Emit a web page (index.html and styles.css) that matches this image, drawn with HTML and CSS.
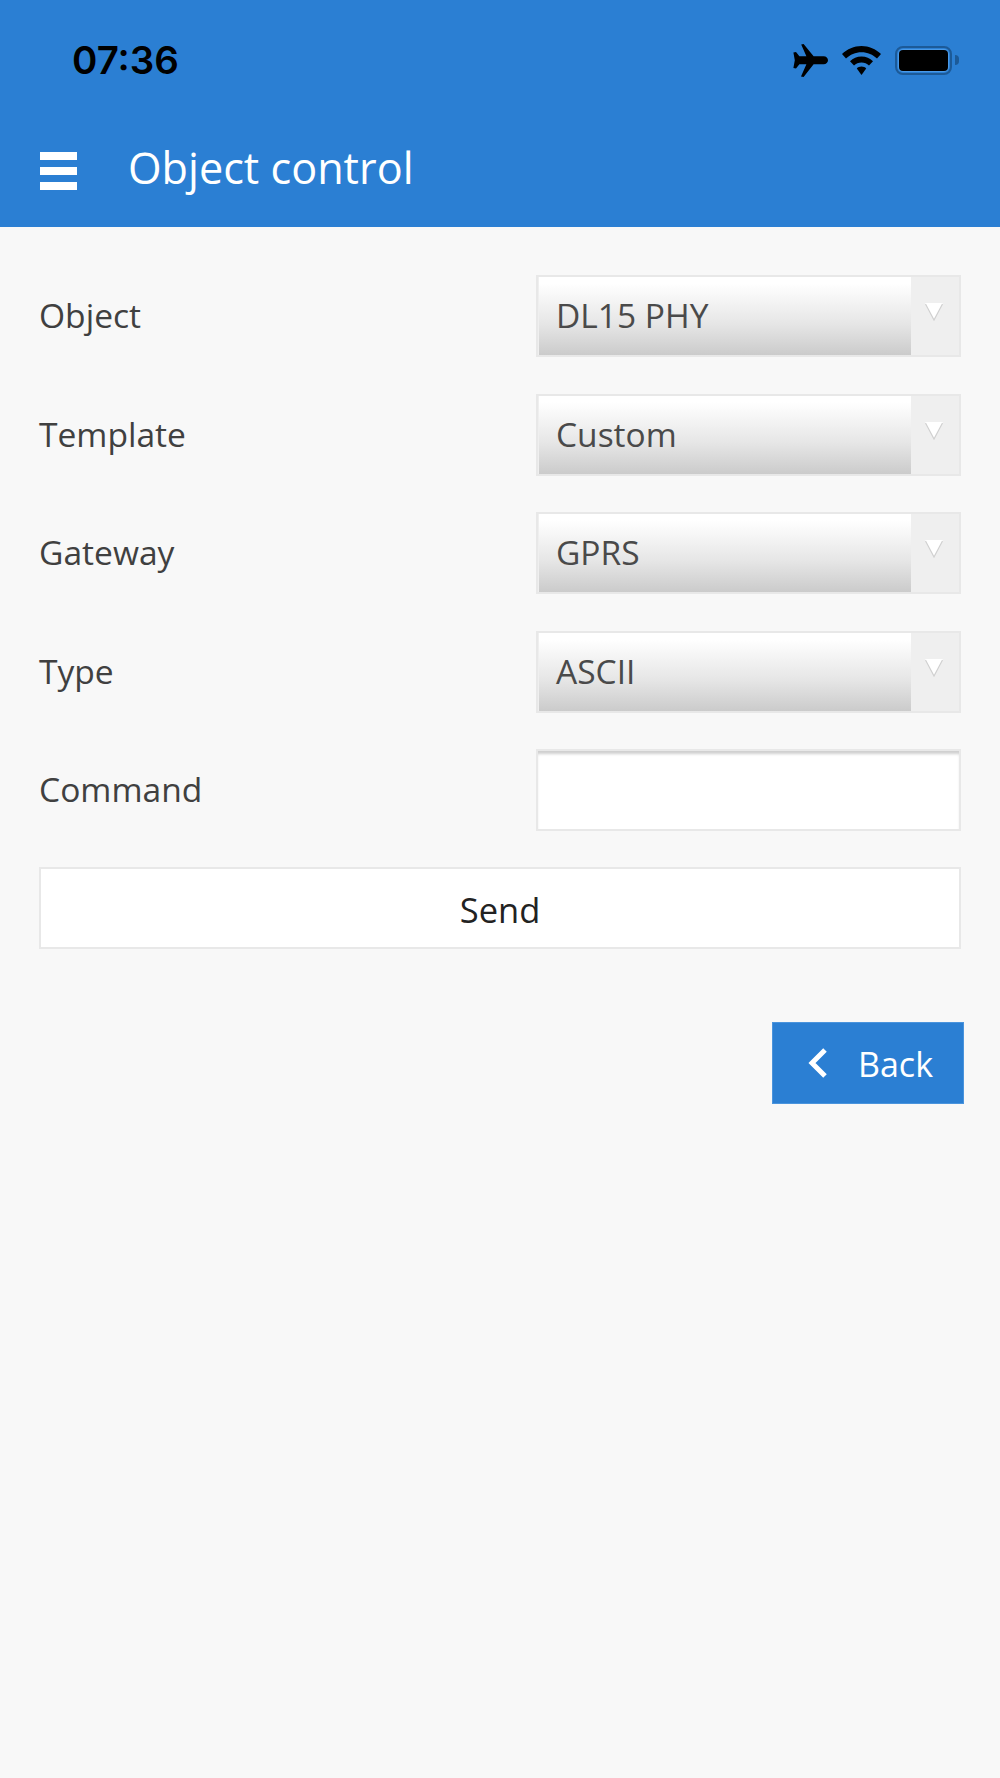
FILE: index.html
```html
<!DOCTYPE html>
<html lang="en">
<head>
  <meta charset="UTF-8" />
  <meta name="viewport" content="width=device-width, initial-scale=1.0"/>
  <title>Object control</title>
  <link rel="stylesheet" href="styles.css">
</head>
<body>

  <header class="app-header">
    <!-- Status bar -->
    <div class="status-bar">
      <span class="clock">07:36</span>
      <div class="status-icons">
        <svg class="icon-plane" viewBox="0 0 35 33" aria-hidden="true">
          <path d="M8.2 0.6 L10.6 0 L20.6 12.2 L30.6 12.2 C33.2 12.2 35 14.4 35 16.2 C35 18.2 33.2 20.2 30.6 20.2 L20.6 20.2 L10.6 33 L8 32.4 L13.4 20.2 L6.4 20.2 L3 24.4 L0.4 24 L1.8 16.2 L0.4 8.4 L3 8 L6.4 12.2 L13.4 12.2 Z"/>
        </svg>
        <svg class="icon-wifi" viewBox="0 0 39 29" aria-hidden="true">
          <path d="M19.5 0 C27 0 33.8 3 39 8 L35 12.6 C31 8.6 25.5 6.2 19.5 6.2 C13.5 6.2 8 8.6 4 12.6 L0 8 C5.2 3 12 0 19.5 0 Z"/>
          <path d="M19.5 10.4 C24 10.4 28 12.2 31 15.2 L27 19.6 C25 17.6 22.4 16.5 19.5 16.5 C16.6 16.5 14 17.6 12 19.6 L8 15.2 C11 12.2 15 10.4 19.5 10.4 Z"/>
          <path d="M19.5 20.6 C21.4 20.6 23 21.3 24.2 22.5 L19.5 29 L14.8 22.5 C16 21.3 17.6 20.6 19.5 20.6 Z"/>
        </svg>
        <div class="battery">
          <div class="battery-level"></div>
        </div>
        <div class="battery-nub"></div>
      </div>
    </div>

    <!-- Title bar -->
    <div class="title-bar">
      <div class="menu-icon"><span></span><span></span><span></span></div>
      <h1>Object control</h1>
    </div>
  </header>

  <main class="content">
    <div class="form-row">
      <label>Object</label>
      <div class="select-box">
        <div class="select-value">DL15 PHY</div>
        <div class="select-arrow"><svg viewBox="0 0 18 18" aria-hidden="true"><path class="arrow-fill" d="M0 0 L18 0 L9 17 Z"/><path class="arrow-line" d="M0.5 1 L9 17 L17.5 1"/></svg></div>
      </div>
    </div>
    <div class="form-row">
      <label>Template</label>
      <div class="select-box">
        <div class="select-value">Custom</div>
        <div class="select-arrow"><svg viewBox="0 0 18 18" aria-hidden="true"><path class="arrow-fill" d="M0 0 L18 0 L9 17 Z"/><path class="arrow-line" d="M0.5 1 L9 17 L17.5 1"/></svg></div>
      </div>
    </div>
    <div class="form-row">
      <label>Gateway</label>
      <div class="select-box">
        <div class="select-value">GPRS</div>
        <div class="select-arrow"><svg viewBox="0 0 18 18" aria-hidden="true"><path class="arrow-fill" d="M0 0 L18 0 L9 17 Z"/><path class="arrow-line" d="M0.5 1 L9 17 L17.5 1"/></svg></div>
      </div>
    </div>
    <div class="form-row">
      <label>Type</label>
      <div class="select-box">
        <div class="select-value">ASCII</div>
        <div class="select-arrow"><svg viewBox="0 0 18 18" aria-hidden="true"><path class="arrow-fill" d="M0 0 L18 0 L9 17 Z"/><path class="arrow-line" d="M0.5 1 L9 17 L17.5 1"/></svg></div>
      </div>
    </div>
    <div class="form-row">
      <label for="command">Command</label>
      <input type="text" id="command" class="text-input" />
    </div>

    <button class="send-btn">Send</button>

    <div class="actions">
      <button class="back-btn">
        <svg viewBox="0 0 20 30" aria-hidden="true"><path d="M17 2 L4 15 L17 28"/></svg>
        Back
      </button>
    </div>
  </main>

</body>
</html>
```

FILE: styles.css
```css
:root {
  --blue: #2b7fd3;
  --bg: #f8f8f8;
  --line: #e8e8e8;
  --text: #404040;
}

* {
  margin: 0;
  padding: 0;
  box-sizing: border-box;
  font-family: 'Open Sans', sans-serif;
}

body {
  background-color: var(--bg);
  color: var(--text);
  min-height: 1778px;
}

.app-header {
  background: var(--blue);
  height: 227px;
}

.status-bar {
  height: 120px;
  display: flex;
  justify-content: space-between;
  padding: 0 41px 0 72px;
  align-items: flex-start;
}

.clock {
  font-family: 'Inter', sans-serif;
  font-weight: 600;
  font-size: 38.5px;
  line-height: 46px;
  margin-top: 37px;
  color: #000;
}

.status-icons {
  display: flex;
  align-items: center;
  margin-top: 44px;
}

.icon-plane {
  width: 35px;
  height: 33px;
  fill: #000;
  margin-right: 14px;
}

.icon-wifi {
  width: 39px;
  height: 29px;
  fill: #000;
  margin-right: 14px;
  margin-top: 0;
}

.battery {
  width: 57px;
  height: 29px;
  border: 2px solid #1c5a98;
  border-radius: 8px;
  padding: 2px;
  margin-top: -1px;
}

.battery-level {
  height: 100%;
  background: #000;
  border-radius: 4px;
  box-shadow: 0 0 0 1px #4a9ae8;
}

.battery-nub {
  width: 4px;
  height: 10px;
  background: #1c5a98;
  border-radius: 0 4px 4px 0;
  margin-left: 3px;
  margin-top: -1px;
}

.title-bar {
  height: 107px;
  display: flex;
  align-items: center;
  padding-left: 40px;
  padding-bottom: 12px;
}

.menu-icon {
  width: 37px;
  height: 38px;
  display: flex;
  flex-direction: column;
  justify-content: space-between;
  margin-right: 51px;
  margin-top: 6px;
}

.menu-icon span {
  height: 8px;
  background: #fff;
}

h1 {
  font-weight: 400;
  font-size: 43.2px;
  color: #fff;
}

.content {
  padding: 48px 39px 0 39px;
}

.form-row {
  display: flex;
  justify-content: space-between;
  align-items: center;
  height: 82px;
  margin-bottom: 36.5px;
}

label {
  font-size: 33.6px;
  color: var(--text);
  margin-top: -2px;
}

.select-box {
  width: 425px;
  height: 82px;
  display: flex;
  border: 2px solid var(--line);
  background: #efefef;
}

.select-value {
  flex: 1;
  font-size: 33.5px;
  color: #4a4a4a;
  line-height: 77px;
  padding-left: 17px;
  background: linear-gradient(to bottom, #ffffff 8%, #e6e6e6 60%, #cbcbcb 100%);
  margin-left: 1px;
}

.select-arrow {
  width: 48px;
  display: flex;
  justify-content: center;
  padding-top: 26px;
  padding-right: 2px;
}

.select-arrow svg {
  width: 18px;
  height: 18px;
}

.arrow-fill {
  fill: #fff;
}

.arrow-line {
  fill: none;
  stroke: #d0d0d0;
  stroke-width: 1.2;
}

.text-input {
  width: 425px;
  height: 82px;
  border: 2px solid var(--line);
  background: #fff;
  box-shadow: inset 0 4px 3px -1px #cfcfcf;
  outline: none;
}

.send-btn {
  display: block;
  width: 100%;
  height: 82px;
  margin-top: -1px;
  padding-top: 4px;
  background: #fff;
  border: 2px solid var(--line);
  font-size: 34.5px;
  color: #222;
}

.actions {
  display: flex;
  justify-content: flex-end;
  margin-top: 73px;
  margin-right: -3px;
}

.back-btn {
  width: 192px;
  height: 82px;
  background: var(--blue);
  border: 1px solid #4a94dd;
  color: #fff;
  font-size: 34px;
  display: flex;
  align-items: center;
  padding-left: 35px;
  padding-top: 3px;
  gap: 30px;
}

.back-btn svg {
  width: 20px;
  height: 30px;
  margin-top: -3px;
  fill: none;
  stroke: #fff;
  stroke-width: 5;
}
```
